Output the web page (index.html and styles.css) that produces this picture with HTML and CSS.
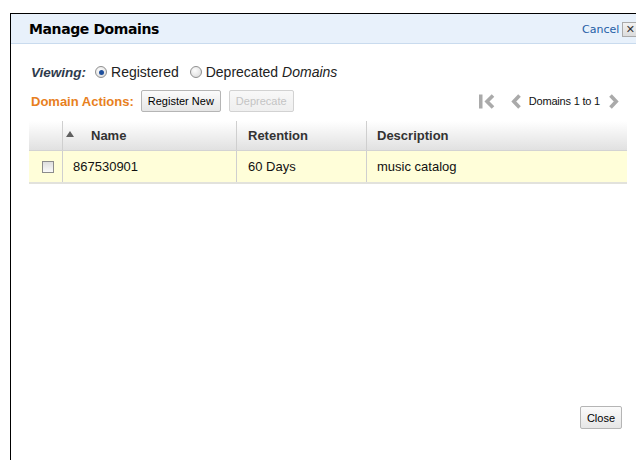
FILE: index.html
```html
<!DOCTYPE html>
<html>
<head>
<meta charset="utf-8">
<link rel="stylesheet" href="styles.css">
</head>
<body>
<div class="dialog">
  <div class="dialog-head">
    <h1 class="dialog-title">Manage Domains</h1>
    <div class="head-actions">
      <a class="cancel-link">Cancel</a>
      <span class="close-x">✕</span>
    </div>
  </div>
  <div class="dialog-body">
    <div class="viewing-row">
      <span class="viewing-label">Viewing:</span>
      <label class="radio"><span class="radio-dot on"></span>Registered</label>
      <label class="radio"><span class="radio-dot"></span>Deprecated <em>Domains</em></label>
    </div>
    <div class="actions-row">
      <div class="actions-left">
        <span class="actions-label">Domain Actions:</span>
        <button class="btn">Register New</button>
        <button class="btn disabled">Deprecate</button>
      </div>
      <div class="pager">
        <svg class="pg-icon first" width="16" height="15" viewBox="0 0 16 15"><rect x="0" y="0.5" width="3.5" height="14" fill="#aaa"/><path d="M14 1.5 L8 7.5 L14 13.5" fill="none" stroke="#aaa" stroke-width="3.6"/></svg>
        <svg class="pg-icon prev" width="10" height="15" viewBox="0 0 10 15"><path d="M8.5 1.5 L2.8 7.5 L8.5 13.5" fill="none" stroke="#aaa" stroke-width="3.6"/></svg>
        <span class="pg-text">Domains 1 to 1</span>
        <svg class="pg-icon next" width="10" height="15" viewBox="0 0 10 15"><path d="M1.5 1.5 L7.2 7.5 L1.5 13.5" fill="none" stroke="#aaa" stroke-width="3.6"/></svg>
      </div>
    </div>
    <div class="grid">
      <div class="grid-row grid-head">
        <div class="cell c-check"></div>
        <div class="cell c-name"><span class="sort-arrow"></span>Name</div>
        <div class="cell c-ret">Retention</div>
        <div class="cell c-desc">Description</div>
      </div>
      <div class="grid-row grid-data">
        <div class="cell c-check"><span class="checkbox"></span></div>
        <div class="cell c-name">867530901</div>
        <div class="cell c-ret">60 Days</div>
        <div class="cell c-desc">music catalog</div>
      </div>
    </div>
    <div class="footer">
      <button class="btn close-btn">Close</button>
    </div>
  </div>
</div>
</body>
</html>
```

FILE: styles.css
```css
html, body {
  margin: 0;
  padding: 0;
  width: 636px;
  height: 460px;
  overflow: hidden;
  background: #fff;
}

.dialog {
  margin: 13px 0 0 10px;
  width: 640px;
  height: 460px;
  border: 1px solid #000;
  box-sizing: border-box;
  font-family: "Liberation Sans", Arial, sans-serif;
}

.dialog-head {
  height: 29px;
  background: #e8f1fb;
  border-bottom: 1px solid #c9dbee;
  display: flex;
  align-items: center;
  justify-content: space-between;
  padding-left: 18px;
}

.dialog-title {
  margin: 0;
  font-family: "DejaVu Sans", Verdana, sans-serif;
  font-size: 14px;
  font-weight: bold;
  color: #000;
  letter-spacing: -0.4px;
}

.head-actions {
  display: flex;
  align-items: center;
  width: 67px;
  gap: 3px;
  padding-top: 1px;
}

.cancel-link {
  font-family: "DejaVu Sans", Verdana, sans-serif;
  font-size: 11px;
  color: #1f5ea6;
}

.close-x {
  width: 16px;
  height: 15px;
  background: linear-gradient(#f2f2f2, #dcdcdc);
  border: 1px solid #aaa;
  box-sizing: border-box;
  font-family: "DejaVu Sans", sans-serif;
  font-size: 11px;
  font-weight: bold;
  line-height: 13px;
  text-align: center;
  color: #333;
}

.dialog-body {
  padding: 0 0 15px 18px;
  display: flex;
  flex-direction: column;
  height: 400px;
  box-sizing: border-box;
  font-size: 13px;
}

.viewing-row {
  display: flex;
  align-items: center;
  height: 20px;
  margin-top: 18px;
  padding-left: 2px;
  color: #222;
}

.viewing-label {
  font-size: 13.5px;
  font-weight: bold;
  font-style: italic;
  color: #2f3b4c;
  margin-right: 9px;
}

.radio {
  display: flex;
  align-items: center;
  font-size: 14px;
  margin-right: 11px;
}

.radio-dot {
  width: 12px;
  height: 12px;
  border-radius: 50%;
  border: 1px solid #8f8f8f;
  background: radial-gradient(circle at 40% 35%, #fdfdfd 0, #d6d6d6 100%);
  box-sizing: border-box;
  margin-right: 4px;
  position: relative;
}

.radio-dot.on::after {
  content: "";
  position: absolute;
  left: 2.5px;
  top: 2.5px;
  width: 5px;
  height: 5px;
  border-radius: 50%;
  background: #1e4f9c;
}

.radio em {
  margin-left: 4px;
}

.actions-row {
  display: flex;
  align-items: center;
  justify-content: space-between;
  margin-top: 8px;
  height: 22px;
  width: 598px;
  box-sizing: border-box;
  padding-left: 2px;
  padding-right: 8px;
}

.actions-left {
  display: flex;
  align-items: center;
}

.actions-label {
  font-weight: bold;
  color: #e8801e;
  margin-right: 7px;
}

.btn {
  font-family: "Liberation Sans", Arial, sans-serif;
  font-size: 11px;
  color: #000;
  height: 22px;
  padding: 0 6px;
  border: 1px solid #b5b5b5;
  border-radius: 2px;
  background: linear-gradient(#fbfbfb, #e6e6e6);
  margin-right: 8px;
}

.btn.disabled {
  color: #c4c4c4;
  border-color: #d2d2d2;
  background: linear-gradient(#f8f8f8, #efefef);
}

.pager {
  display: flex;
  align-items: center;
}

.pg-icon.first { margin-right: 16px; }
.pg-icon.prev { margin-right: 8px; }
.pg-icon.next { margin-left: 9px; }

.pg-text {
  font-size: 11px;
  letter-spacing: -0.2px;
  color: #111;
}

.grid {
  margin-top: 9px;
  width: 598px;
}

.grid-row {
  display: flex;
}

.grid-head {
  height: 29px;
  background: linear-gradient(#ffffff, #e1e1e1);
  border-bottom: 1px solid #d3d3d3;
  font-weight: bold;
  color: #333;
}

.grid-data {
  height: 31px;
  background: #fffed9;
  border-bottom: 2px solid #e2e2dc;
  color: #111;
}

.cell {
  display: flex;
  align-items: center;
  box-sizing: border-box;
  border-right: 1px solid #cfcfcf;
}

.c-check {
  width: 34px;
  justify-content: center;
  padding-left: 4px;
}

.c-name {
  width: 174px;
  padding-left: 10px;
}

.grid-head .c-name {
  padding-left: 3px;
}

.c-ret {
  width: 130px;
  padding-left: 11px;
}

.c-desc {
  flex: 1;
  padding-left: 10px;
  border-right: none;
}

.sort-arrow {
  width: 0;
  height: 0;
  border-left: 4px solid transparent;
  border-right: 4px solid transparent;
  border-bottom: 6px solid #606060;
  margin-right: 17px;
  margin-top: -4px;
}

.checkbox {
  width: 12px;
  height: 12px;
  border: 1px solid #8c8c8c;
  background: linear-gradient(#dedede, #fafafa);
  box-sizing: border-box;
}

.footer {
  margin-top: auto;
  display: flex;
  justify-content: flex-end;
  width: 593px;
}

.close-btn {
  margin-right: 0;
  height: 23px;
  padding: 0 6px;
}
```
